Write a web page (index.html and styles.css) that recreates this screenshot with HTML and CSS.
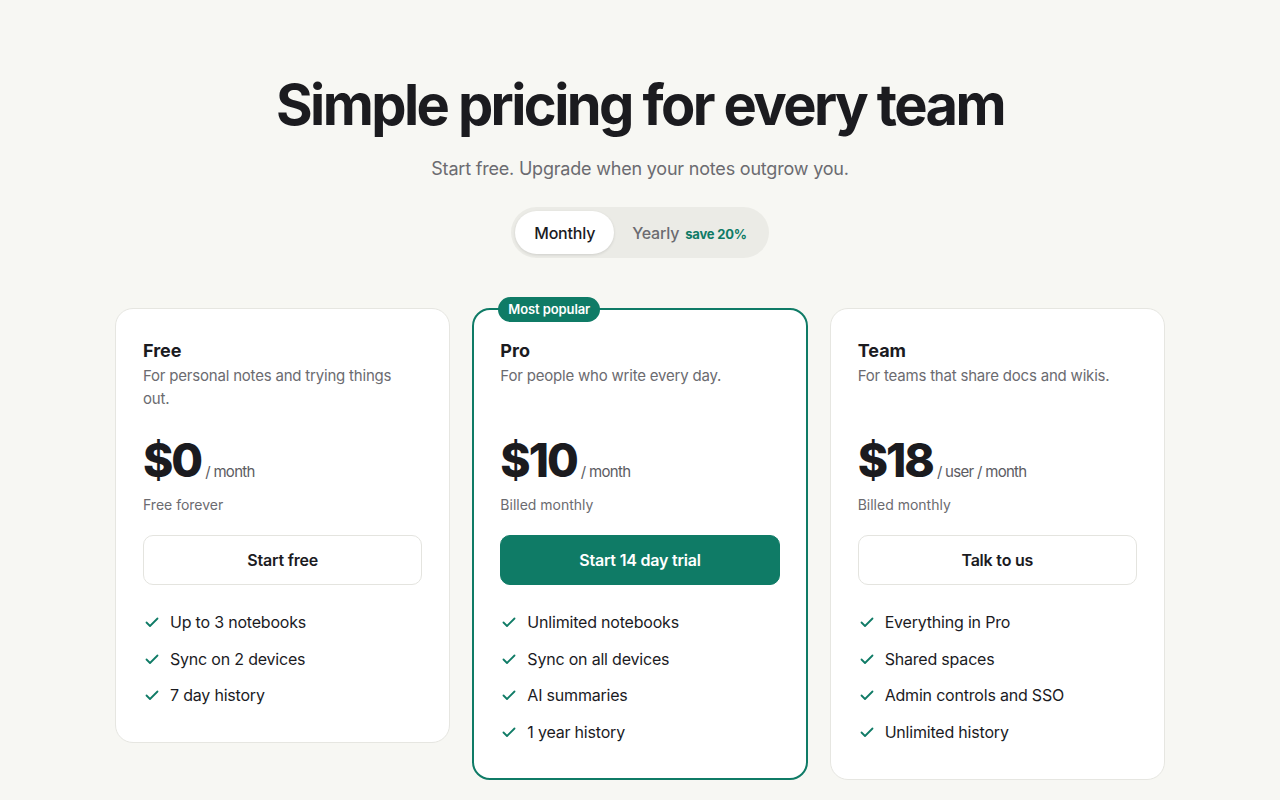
FILE: index.html
```html
<!DOCTYPE html>
<html lang="en">
<head>
    <meta charset="UTF-8">
    <meta name="viewport" content="width=device-width, initial-scale=1.0">
    <title>Pricing</title>
    <link rel="stylesheet" href="styles.css">
</head>
<body>
    <div class="page">
        <header class="hero">
            <h1>Simple pricing for every team</h1>
            <p class="lead">Start free. Upgrade when your notes outgrow you.</p>
            <div class="toggle">
                <button class="toggle-btn active">Monthly</button>
                <button class="toggle-btn">Yearly <span class="save">save 20%</span></button>
            </div>
        </header>

        <div class="plans">
            <div class="card">
                <h2>Free</h2>
                <p class="desc">For personal notes and trying things out.</p>
                <div class="price"><span class="amount">$0</span><span class="per">/ month</span></div>
                <p class="billing">Free forever</p>
                <button class="cta">Start free</button>
                <ul class="features">
                    <li><svg viewBox="0 0 16 16"><path d="M2.5 8.5l3.5 3.5 7.5-7.5"/></svg>Up to 3 notebooks</li>
                    <li><svg viewBox="0 0 16 16"><path d="M2.5 8.5l3.5 3.5 7.5-7.5"/></svg>Sync on 2 devices</li>
                    <li><svg viewBox="0 0 16 16"><path d="M2.5 8.5l3.5 3.5 7.5-7.5"/></svg>7 day history</li>
                </ul>
            </div>

            <div class="card featured">
                <span class="badge">Most popular</span>
                <h2>Pro</h2>
                <p class="desc">For people who write every day.</p>
                <div class="price"><span class="amount">$10</span><span class="per">/ month</span></div>
                <p class="billing">Billed monthly</p>
                <button class="cta primary">Start 14 day trial</button>
                <ul class="features">
                    <li><svg viewBox="0 0 16 16"><path d="M2.5 8.5l3.5 3.5 7.5-7.5"/></svg>Unlimited notebooks</li>
                    <li><svg viewBox="0 0 16 16"><path d="M2.5 8.5l3.5 3.5 7.5-7.5"/></svg>Sync on all devices</li>
                    <li><svg viewBox="0 0 16 16"><path d="M2.5 8.5l3.5 3.5 7.5-7.5"/></svg>AI summaries</li>
                    <li><svg viewBox="0 0 16 16"><path d="M2.5 8.5l3.5 3.5 7.5-7.5"/></svg>1 year history</li>
                </ul>
            </div>

            <div class="card">
                <h2>Team</h2>
                <p class="desc">For teams that share docs and wikis.</p>
                <div class="price"><span class="amount">$18</span><span class="per">/ user / month</span></div>
                <p class="billing">Billed monthly</p>
                <button class="cta">Talk to us</button>
                <ul class="features">
                    <li><svg viewBox="0 0 16 16"><path d="M2.5 8.5l3.5 3.5 7.5-7.5"/></svg>Everything in Pro</li>
                    <li><svg viewBox="0 0 16 16"><path d="M2.5 8.5l3.5 3.5 7.5-7.5"/></svg>Shared spaces</li>
                    <li><svg viewBox="0 0 16 16"><path d="M2.5 8.5l3.5 3.5 7.5-7.5"/></svg>Admin controls and SSO</li>
                    <li><svg viewBox="0 0 16 16"><path d="M2.5 8.5l3.5 3.5 7.5-7.5"/></svg>Unlimited history</li>
                </ul>
            </div>
        </div>
    </div>
</body>
</html>
```

FILE: styles.css
```css
* {
    box-sizing: border-box;
}
body {
    margin: 0;
    background-color: #f7f7f3;
    font-family: Inter, "Noto Sans", sans-serif;
    color: #1b1b1f;
}
.page {
    width: 1050px;
    margin: 0 auto;
    padding-top: 70px;
}
.hero {
    text-align: center;
}
h1 {
    margin: 0;
    font-size: 56px;
    line-height: 70px;
    font-weight: 700;
    letter-spacing: -2.6px;
}
.lead {
    margin: 16px 0 0;
    font-size: 18px;
    line-height: 26px;
    color: #6b6b70;
    letter-spacing: -0.2px;
}
.toggle {
    display: inline-flex;
    align-items: center;
    margin-top: 25px;
    padding: 4px;
    background-color: #ebebe6;
    border-radius: 26px;
}
.toggle-btn {
    border: 0;
    background: none;
    font-family: inherit;
    font-size: 16px;
    font-weight: 500;
    color: #6b6b70;
    height: 43px;
    padding: 0 18px;
    border-radius: 22px;
    cursor: pointer;
    letter-spacing: -0.2px;
}
.toggle-btn.active {
    background-color: #fff;
    color: #1b1b1f;
    padding: 0 19px;
    box-shadow: 0 1px 3px rgba(0, 0, 0, 0.12);
}
.save {
    color: #0f7b66;
    font-size: 13px;
    font-weight: 700;
    margin-left: 2px;
}
.plans {
    display: grid;
    grid-template-columns: repeat(3, 1fr);
    gap: 22px;
    align-items: start;
    margin-top: 50px;
}
.card {
    position: relative;
    background-color: #fff;
    border: 1px solid #e6e6e1;
    border-radius: 18px;
    padding: 29px 27px 29px;
}
.card.featured {
    border: 2px solid #0f7b66;
    padding: 28px 26px 28px;
}
.badge {
    position: absolute;
    top: -13px;
    left: 24px;
    background-color: #0f7b66;
    color: #fff;
    font-size: 13px;
    font-weight: 600;
    line-height: 25px;
    padding: 0 10px;
    border-radius: 13px;
    letter-spacing: -0.1px;
}
h2 {
    margin: 0;
    font-size: 18px;
    line-height: 26px;
    font-weight: 700;
}
.desc {
    margin: 0;
    max-width: 262px;
    min-height: 46px;
    font-size: 15px;
    line-height: 23px;
    color: #6b6b70;
    letter-spacing: -0.2px;
}
.price {
    display: flex;
    align-items: baseline;
    margin-top: 22px;
    height: 56px;
}
.amount {
    font-size: 46px;
    line-height: 56px;
    font-weight: 800;
    letter-spacing: -2px;
}
.per {
    margin-left: 4px;
    font-size: 15px;
    color: #5c5c62;
    letter-spacing: -0.7px;
}
.billing {
    margin: 7px 0 0;
    font-size: 14px;
    line-height: 20px;
    color: #6b6b70;
}
.cta {
    display: block;
    width: 100%;
    height: 50px;
    margin-top: 20px;
    border: 1px solid #e4e4df;
    border-radius: 10px;
    background-color: #fff;
    font-family: inherit;
    font-size: 16px;
    font-weight: 600;
    color: #1b1b1f;
    letter-spacing: -0.2px;
    cursor: pointer;
}
.cta.primary {
    background-color: #0f7b66;
    border-color: #0f7b66;
    color: #fff;
}
.features {
    list-style: none;
    margin: 25px 0 0;
    padding: 0 0 6px;
    display: flex;
    flex-direction: column;
    gap: 12.5px;
}
.features li {
    display: flex;
    align-items: center;
    gap: 10px;
    font-size: 16px;
    line-height: 24px;
    letter-spacing: -0.2px;
}
.features svg {
    width: 16px;
    height: 16px;
    margin-left: 1px;
    fill: none;
    stroke: #0f7b66;
    stroke-width: 1.8;
    stroke-linecap: round;
    stroke-linejoin: round;
}
```
